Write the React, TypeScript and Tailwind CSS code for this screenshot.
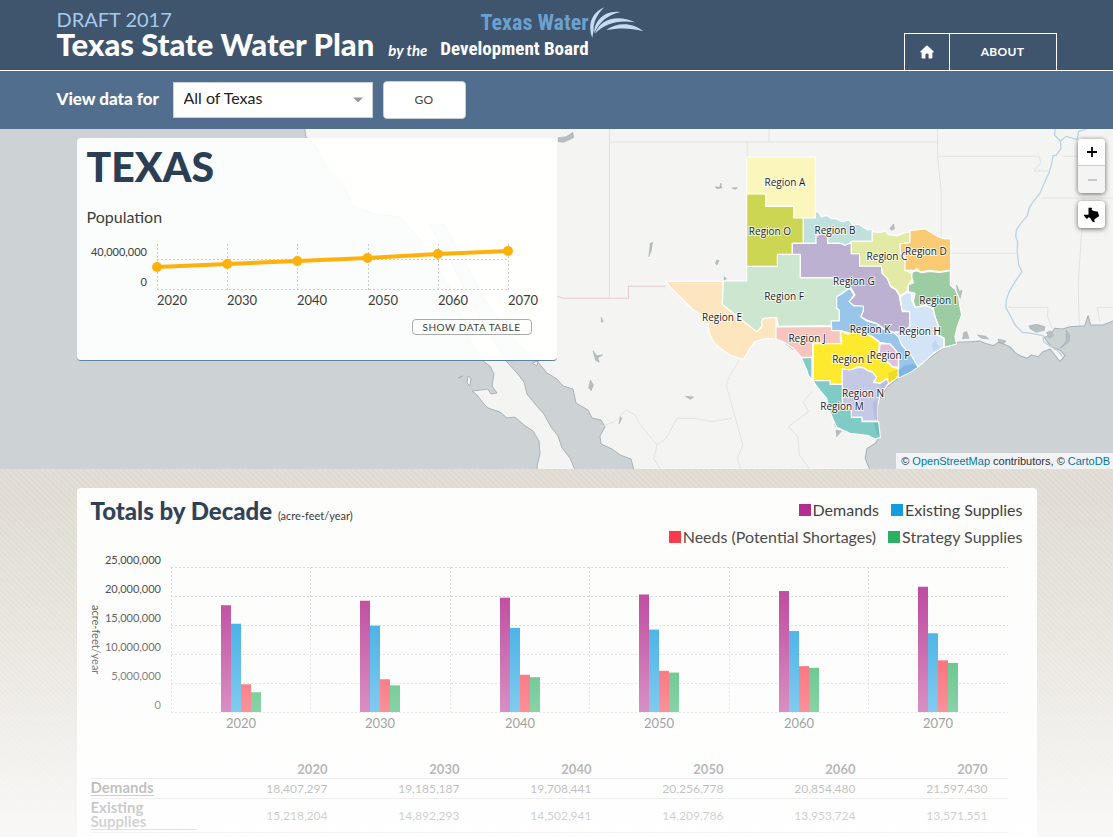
import React from 'react';

const YEARS = [2020, 2030, 2040, 2050, 2060, 2070];

const SERIES = [
  { name: 'Demands', color: '#b3298c', values: [18407297, 19185187, 19708441, 20256778, 20854480, 21597430] },
  { name: 'Existing Supplies', color: '#0f9ade', values: [15218204, 14892293, 14502941, 14209786, 13953724, 13571551] },
  { name: 'Needs (Potential Shortages)', color: '#f72c3c', values: [4780000, 5650000, 6420000, 7100000, 7900000, 8900000] },
  { name: 'Strategy Supplies', color: '#1bab55', values: [3400000, 4600000, 6000000, 6800000, 7620000, 8450000] },
];

const REGIONS = [
  { id: 'E', color: '#fde5bf', x: 215, y: 542, d: 'M46,424 L220,424 L217,493 L320,575 L335,562 V535 L360,530 L378,532 V597 L350,595 L315,605 L300,625 L280,659 L240,645 L210,625 L190,605 L178,580 L175,555 L155,525 L130,510 L110,490 L90,470 L60,440Z' },
  { id: 'F', color: '#cde6cf', x: 401, y: 479, d: 'M290,379 H382 V343 H451 V413 H551 L575,432 L600,440 L590,450 L575,460 L560,470 V505 L568,510 V543 H544 V557 L385,559 L380,532 L340,535 L335,545 V560 L320,575 L217,493 L220,423 H290Z' },
  { id: 'A', color: '#fbf6bc', x: 405, y: 137, d: 'M290,51 H496 V234 H431 V199 H347 V162 H290Z' },
  { id: 'O', color: '#ccd653', x: 361, y: 284, d: 'M290,162 H347 V199 H431 V234 H460 V310 H427 V343 H382 V379 H290Z' },
  { id: 'B', color: '#bfe0dc', x: 555, y: 282, d: 'M460,234 H496 V213 L508,219 L514,231 L530,226 L545,236 L560,236 L575,245 L598,240 L608,255 L625,252 L640,262 L655,270 L667,268 V304 H604 L600,310 L585,316 L570,310 H533 V290 L515,280 L498,290 V310 H460Z' },
  { id: 'G', color: '#bcb1d1', x: 612, y: 434, d: 'M427,310 H498 V289 L515,280 L533,289 V310 H570 L585,316 L604,308 V341 H629 V378 H694 L697,400 L712,415 L722,440 L738,450 L748,467 L752,490 L757,515 H779 V560 L760,574 L730,577 L700,565 L680,550 L650,540 L632,530 L640,512 V500 L612,497 L597,485 L615,465 L600,440 L575,430 L551,413 H451 V343 H427Z' },
  { id: 'C', color: '#e3eaa5', x: 710, y: 361, d: 'M604,304 H667 V275 L690,278 L705,272 L715,283 L740,288 L765,278 L780,276 V308 L750,312 L752,340 L765,350 V390 L787,402 L787,418 L775,435 L770,455 L750,467 L738,447 L722,438 L712,415 L697,400 L694,378 H629 V341 H604Z' },
  { id: 'D', color: '#facb73', x: 829, y: 346, d: 'M780,272 L800,270 L825,266 L845,278 L860,288 L880,296 L902,297 V390 L870,395 L838,391 L812,396 L800,386 L795,391 H765 V350 L752,340 L750,312 L780,308Z' },
  { id: 'I', color: '#9ccca1', x: 865, y: 492, d: 'M787,396 L800,392 L815,398 L838,394 L870,397 L901,392 V435 L915,448 L925,470 L930,500 L935,525 L922,560 L915,590 L920,612 L883,622 V595 L862,585 L865,555 L855,530 L850,505 L825,495 L797,502 L790,485 L795,460 L775,455 V435 L790,428 L785,410Z' },
  { id: 'H', color: '#d2e4f6', x: 810, y: 584, d: 'M750,470 L770,458 L785,460 L785,480 L795,502 L825,497 L848,505 L855,530 L865,560 L862,585 L881,595 V622 L850,640 L820,668 L804,680 L785,650 L755,615 L745,590 L730,577 L760,574 L779,560 V515 L757,512Z' },
  { id: 'K', color: '#99c5ea', x: 661, y: 580, d: 'M600,446 L612,465 L597,485 L612,498 H640 V512 L632,530 L650,543 L680,552 L700,567 L730,578 L745,590 L755,615 L785,648 L804,681 L780,697 L746,714 V665 L745,640 L720,612 L690,607 L665,588 L640,580 L595,578 L571,572 H544 V543 H568 V510 L560,505 V470 L575,462 L590,450Z' },
  { id: 'J', color: '#f6c5be', x: 472, y: 605, d: 'M378,561 L545,559 V572 H571 V600 L575,611 H488 V652 H454 L430,625 L405,608 L378,597Z' },
  { id: 'L', color: '#fdea2f', x: 606, y: 668, d: 'M571,572 L590,582 L640,578 L665,590 L688,607 L685,640 L710,665 L725,680 L745,685 V710 L715,733 L712,715 L690,729 L670,725 L680,712 L665,705 L668,695 L650,690 L640,682 L625,680 L600,690 L577,687 V733 H540 V722 H490 V611 H575 V600Z' },
  { id: 'P', color: '#dfbfdc', x: 721, y: 656, d: 'M690,612 L720,612 L738,632 L745,650 V682 L728,680 L708,660 L688,640Z' },
  { id: 'N', color: '#c5c9e5', x: 638, y: 770, d: 'M577,687 L600,690 L625,682 L642,684 L652,692 L668,697 L680,712 L670,727 L690,730 L712,716 L716,730 L690,765 L683,800 V843 H636 V832 H604 V805 L577,800Z' },
  { id: 'M', color: '#80cbc5', x: 576, y: 811, d: 'M454,653 H486 V722 H540 V733 H577 V800 L604,805 V832 H636 V845 H686 L691,893 L675,897 L655,887 L600,880 L560,862 L550,840 L538,810 L530,775 L510,752 L488,722 L475,705 L470,690Z' },
];

const MAP_LINES = [
  'M190 12 V518',
  'M190 51 H1088',
  'M567 51 V96',
  'M627 12 V51',
  'M1088 12 V94 H1366 L1371 112 L1352 138 H1395',
  'M1088 94 L1098 200 V385 H1303',
  'M1375 219 H1568',
  'M1281 547 H1390 L1389 575 L1402 612',
  'M1488 219 L1473 480 L1476 600',
  'M1430 94 H1480',
  'M1568 547 H1525 L1532 590',
  'M545 705 C530 740 500 770 515 800 L555 960 L540 1000 L550 1035',
  'M165 905 L205 890 L235 855 L260 870 L275 900 L320 960 L345 940 L375 880 L420 880 L470 890 L525 880',
  'M320 960 L312 1000 L330 1035',
  'M745 800 L720 830 L735 860 L680 905 L705 935 L710 990 L740 1035',
];

const LAKES = [
  'M480 185 L492 187 L495 174 L497 189 L484 191Z',
  'M525 189 L540 188 L536 193Z',
  'M302 355 L308 352 L304 378 L298 395Z',
  'M484 405 L490 407 L484 420 L480 416Z',
  'M145 677 L155 692 L172 690 L158 698 L162 712 L152 706Z',
  'M138 765 L146 780 L140 797 L133 788Z',
  'M398 814 L420 816 L412 823Z',
  'M220 875 L224 880 L216 897Z',
  'M505 455 L510 462 L504 466Z',
  'M168 577 L173 590 L168 592Z',
  'M1140 480 L1148 500 L1155 495 L1150 520 L1142 500Z',
  'M1160 622 L1168 620 L1174 640 L1156 641Z',
  'M1197 630 L1220 634 L1228 642 L1208 640Z',
  'M1254 642 L1275 648 L1268 658 L1255 652Z',
  'M1338 602 L1360 598 L1382 605 L1380 616 L1358 622 L1342 612Z',
  'M958 310 L968 297 L970 312 L962 316Z',
  'M1386 622 L1398 618 L1405 632 L1394 640Z',
  'M1440 615 L1450 630 L1448 650 L1424 670 L1440 648Z',
  'M805 880 L815 900 L808 905Z',
  'M810 915 L825 918 L812 935Z',
  'M670 655 L690 665 L695 675Z',
  'M50 38 L72 35 L90 22 L92 38 L65 52 L50 50Z',
];

const COLUMN = 837 / 6;

function RegionMap() {
  return (
    <svg
      className="block h-full w-full bg-[#f4f4f2]"
      viewBox="0 129 1113 340"
      preserveAspectRatio="xMidYMid slice"
      role="img"
      aria-label="Map of the Texas regional water planning areas"
    >
      <g fill="#cdd2d5" stroke="#a9b3b7" strokeWidth="1" strokeLinejoin="round">
        <path d="M-5 124 H304 L306 137 L316 146 L326 166 L345 188 L352 205 L372 213 L400 217 L420 240 L440 270 L455 300 L470 340 L483 361 L490 366 L494 374 L492 386 L497 393 L491 394 L488 389 L472 391 L477 395 L484 404 L488 408 L500 412 L507 418 L515 417 L524 425 L533 431 L539 441 L540 454 L537 466 L538 475 H-5Z" />
        <path d="M430 225 L455 270 L480 320 L507 362 L517 373 L524 382 L527 394 L536 405 L544 414 L551 427 L558 436 L562 448 L570 458 L575 470 L634 470 L631 459 L620 455 L612 449 L601 444 L600 436 L605 427 L601 420 L592 418 L588 410 L576 403 L573 389 L563 386 L557 379 L547 373 L537 361 L510 335 L485 300 L465 262 L445 225Z" />
        <path d="M463 376 L458 378Z" />
      </g>
      <path d="M468 376 L471 378 L470 386 L467 383Z M532 363 L538 361 L537 366Z" fill="#f4f4f2" stroke="#a9b3b7" strokeWidth="1" />
      <g transform="translate(540 125) scale(0.3654 0.333333)">
        <g fill="none" stroke="#dfe0df" strokeWidth="2.5">
          {MAP_LINES.map((d) => (
            <path key={d} d={d} />
          ))}
        </g>
        <path d="M45 513 L65 520 H242 V484 H343" fill="none" stroke="#e3cccf" strokeWidth="3" />
        <path
          d="M905 1040 L890 1000 L895 970 L918 955 L930 935 L925 880 V830 L950 785 L980 760 L1035 725 L1065 700 L1105 668 L1140 652 L1177 650 L1204 648 L1218 655 L1241 662 L1254 652 L1268 657 L1286 665 L1300 683 L1318 694 L1332 700 L1345 690 L1364 695 L1377 680 L1396 672 L1409 690 L1423 710 L1437 692 L1423 675 L1400 666 L1388 650 L1380 637 L1398 628 L1409 610 L1430 612 L1450 605 L1491 602 L1500 572 L1507 600 L1541 600 L1568 588 L1590 582 V1040Z"
          fill="#cdd2d5"
          stroke="#a9b3b7"
          strokeWidth="3"
          strokeLinejoin="round"
        />
        <g fill="#b7bfc3" stroke="#9ea9ae" strokeWidth="1.5">
          {LAKES.map((d) => (
            <path key={d} d={d} />
          ))}
        </g>
        <path
          d="M1410 12 L1408 30 L1424 48 L1426 70 L1412 92 L1404 92 L1400 118 L1394 140 L1386 160 L1378 180 L1368 205 L1350 230 L1338 250 L1334 272 L1316 295 L1304 315 L1302 335 L1307 350 L1306 380 L1310 420 L1319 440 L1300 470 L1284 500 L1276 525 L1275 548 L1286 570 L1300 600 L1320 622 L1345 625 L1377 632 L1378 650 L1400 666 L1420 680 L1430 695 M1424 48 L1440 34 L1470 44 L1474 20 L1495 12"
          fill="none"
          stroke="#b9d2e6"
          strokeWidth="3.5"
          strokeLinejoin="round"
        />
      </g>
      <g transform="translate(650 140) scale(0.333333)">
        <g stroke="#ffffff" strokeWidth="3.5" strokeLinejoin="round">
          {REGIONS.map((r) => (
            <path key={r.id} d={r.d} fill={r.color} />
          ))}
        </g>
        <g>
          <path d="M746 690 L765 676 L790 672 L802 681 L780 696 L747 712Z" fill="#7db5e5" />
          <path d="M715 700 L742 690 V708 L716 730Z" fill="#eedb25" />
          <path d="M668 790 L682 775 V842 L672 830Z M690 735 L708 722 L712 730 L694 752Z" fill="#b9bede" />
          <path d="M845 612 L858 600 L862 615 L872 620 L850 635Z" fill="#bfd7f0" />
          <path d="M672 848 H684 L689 890 L680 880Z" fill="#73bcb7" />
        </g>
      </g>
      <g
        className="font-['Open_Sans',sans-serif] text-[10px]"
        fill="#1c1c1c"
        stroke="#ffffff"
        strokeOpacity="0.75"
        strokeWidth="2"
        paintOrder="stroke"
        textAnchor="middle"
      >
        {REGIONS.map((r) => (
          <text key={r.id} x={650 + Math.round(r.x / 3)} y={140 + Math.round(r.y / 3)}>
            Region {r.id}
          </text>
        ))}
      </g>
    </svg>
  );
}

function PopulationChart() {
  const ys = [35, 32, 29, 26, 22, 19];
  const xs = YEARS.map((_, i) => 70 + i * 70.2);
  return (
    <svg className="block h-auto w-full" viewBox="0 0 460 84" role="img" aria-label="Population by decade">
      <g stroke="#cccccc" strokeWidth="1" strokeDasharray="2 2">
        <path d="M70 27.5 H421 M70 57.5 H421" />
        {xs.map((x) => (
          <path key={x} d={`M${Math.round(x) + 0.5} 12 V58`} />
        ))}
      </g>
      <polyline points={xs.map((x, i) => `${x},${ys[i]}`).join(' ')} fill="none" stroke="#ffb10a" strokeWidth="4" />
      {xs.map((x, i) => (
        <circle key={x} cx={x} cy={ys[i]} r="5" fill="#ffb10a" />
      ))}
      <g className="text-[11px]" fill="#3c3c3c" textAnchor="end">
        <text x="60" y="24">40,000,000</text>
        <text x="60" y="54">0</text>
      </g>
      <g className="text-[13px]" fill="#3c3c3c">
        {YEARS.map((year, i) => (
          <text key={year} x={Math.round(xs[i])} y="73">{year}</text>
        ))}
      </g>
    </svg>
  );
}

function TotalsChart() {
  const ticks = [25, 20, 15, 10, 5, 0];
  return (
    <svg className="block h-auto w-full" viewBox="0 0 917 184" role="img" aria-label="Totals by decade in acre-feet per year">
      <g stroke="#d4d4d4" strokeWidth="1" strokeDasharray="2 2">
        {ticks.map((t, i) => (
          <path key={t} d={`M80 ${15.5 + i * 29} H917`} />
        ))}
        {YEARS.map((year, i) => (
          <path key={year} d={`M${Math.floor(80 + i * COLUMN) + 0.5} 15 V160`} />
        ))}
      </g>
      {YEARS.map((year, i) => (
        <g key={year}>
          {SERIES.map((s, j) => {
            const h = (s.values[i] / 25000000) * 145;
            return (
              <rect key={s.name} x={Math.floor(80 + i * COLUMN) + 50 + j * 10} y={160 - h} width="10" height={h} fill={s.color} />
            );
          })}
          <text className="text-[13px]" x={Math.round(80 + i * COLUMN + COLUMN / 2)} y="176" fill="#3c3c3c" textAnchor="middle">
            {year}
          </text>
        </g>
      ))}
      <g className="text-[11px]" fill="#2c2c2c" textAnchor="end">
        {ticks.map((t, i) => (
          <text key={t} x="70" y={12 + i * 29}>
            {t === 0 ? '0' : `${t},000,000`}
          </text>
        ))}
      </g>
      <text className="text-[11px]" transform="translate(1 53) rotate(90)" fill="#2c2c2c">
        acre-feet/year
      </text>
    </svg>
  );
}

export default function App() {
  return (
    <div className="flex min-h-screen flex-col bg-white font-['Lato',sans-serif] text-[#3c3c3c]">
      <header className="border-b border-white bg-[#3f546d]">
        <div className="mx-auto flex h-[70px] max-w-[1000px] items-end justify-between">
          <div className="flex items-end">
            <div className="pb-[11px]">
              <p className="text-[20px] leading-[20px] text-[#a5cbec]">DRAFT 2017</p>
              <h1 className="font-['Lato_Black','Lato',sans-serif] text-[31px] leading-[30px] font-black whitespace-nowrap text-white">
                Texas State Water Plan
              </h1>
            </div>
            <p className="ml-[14px] pb-3 text-[15px] leading-[16px] font-bold text-white italic">by the</p>
            <a
              href="#twdb"
              className="ml-[13px] flex items-start pb-[9px] font-['Roboto_Condensed','Lato',sans-serif] font-bold whitespace-nowrap"
            >
              <span className="flex flex-col items-end pt-[2px]">
                <span className="text-[22px] leading-[28px] text-[#6aa1ce]">Texas Water</span>
                <span className="text-[19px] leading-[24px] text-white">Development Board</span>
              </span>
              <svg className="h-[32px] w-[55px]" viewBox="648 14 165 96" fill="#c3dcf3" aria-hidden="true">
                <path d="M658 106 C644 72 652 32 694 15 C672 36 660 62 662 84Z" />
                <path d="M664 92 C662 58 694 22 742 29 C704 38 678 60 664 92Z" />
                <path d="M666 94 C680 52 732 34 786 60 C738 52 696 62 666 94Z" />
                <path d="M700 83 C732 58 780 60 811 87 C772 76 740 76 700 83Z" />
              </svg>
            </a>
          </div>
          <nav className="flex h-[37px] border border-b-0 border-white">
            <a href="#home" aria-label="Home" className="flex w-[45px] items-center justify-center border-r border-white">
              <svg className="h-[14px] w-[14px]" viewBox="119 72 44 43" fill="#ffffff" aria-hidden="true">
                <path d="M139 74 Q141 72 143 74 L162 92 Q163 95 160 95 H158 V111 Q158 114 155 114 H146 V102 Q146 98 141 98 Q136 98 136 102 V114 H127 Q124 114 124 111 V95 H122 Q119 95 120 92Z" />
              </svg>
            </a>
            <a href="#about" className="flex w-[106px] items-center justify-center text-[12px] font-bold tracking-wide text-white">
              ABOUT
            </a>
          </nav>
        </div>
      </header>

      <form className="bg-[#526e8f]" onSubmit={(e) => e.preventDefault()}>
        <div className="mx-auto flex h-[58px] max-w-[1000px] items-center gap-[10px]">
          <label htmlFor="region" className="min-w-[106px] pb-[2px] font-['Lato_Black','Lato',sans-serif] text-[17px] font-black whitespace-nowrap text-white">
            View data for
          </label>
          <div className="relative">
            <select
              id="region"
              defaultValue="all"
              className="block h-[36px] w-[200px] appearance-none border border-[#c9ced3] bg-white pb-[4px] pl-[10px] text-[16px] text-[#222222]"
            >
              <option value="all">All of Texas</option>
            </select>
            <svg className="pointer-events-none absolute top-[15px] right-[10px] h-[6px] w-[10px]" viewBox="0 0 10 6" fill="#999999" aria-hidden="true">
              <path d="M0 0.5 H10 L5 5.5Z" />
            </svg>
          </div>
          <button type="submit" className="h-[38px] w-[83px] rounded border border-[#c9ced3] bg-white text-[12px] tracking-wide text-[#444444]">
            GO
          </button>
        </div>
      </form>

      <section className="relative h-[340px] overflow-hidden">
        <RegionMap />
        <div className="absolute inset-x-0 top-[9px] mx-auto w-[960px] max-w-full">
          <div className="flex h-[223px] w-[480px] flex-col rounded-[4px] border-b border-[#5d80a8] bg-white/92 px-[10px]">
            <h2 className="mt-[7px] font-['Lato_Black','Lato',sans-serif] text-[41px] leading-[44px] font-black text-[#2b3e54]">TEXAS</h2>
            <h3 className="mt-[16px] text-[16px] leading-[24px]">Population</h3>
            <div className="mt-[3px]">
              <PopulationChart />
            </div>
            <div className="mt-[3px] flex justify-end pr-[15px]">
              <button type="button" className="h-[16px] w-[120px] rounded-[4px] border border-[#aaaaaa] bg-white text-[10px] leading-[14px] tracking-wider whitespace-nowrap">
                SHOW DATA TABLE
              </button>
            </div>
          </div>
        </div>
        <div className="absolute top-[10px] right-[8px] flex flex-col gap-2">
          <div className="flex flex-col overflow-hidden rounded-[4px] shadow-[0_1px_5px_rgba(0,0,0,0.6)]">
            <button type="button" aria-label="Zoom in" className="flex h-[27px] w-[27px] items-center justify-center border-b border-[#cccccc] bg-white">
              <svg className="h-[10px] w-[10px]" viewBox="0 0 10 10" aria-hidden="true">
                <path d="M5 0 V10 M0 5 H10" stroke="#000000" strokeWidth="1.8" />
              </svg>
            </button>
            <button type="button" aria-label="Zoom out" className="flex h-[27px] w-[27px] items-center justify-center bg-[#f4f4f4]">
              <svg className="h-[10px] w-[10px]" viewBox="0 0 10 10" aria-hidden="true">
                <path d="M1 5 H10" stroke="#bbbbbb" strokeWidth="1.6" />
              </svg>
            </button>
          </div>
          <button type="button" aria-label="Show all of Texas" className="flex h-[27px] w-[27px] items-center justify-center rounded-[4px] bg-white shadow-[0_1px_5px_rgba(0,0,0,0.6)]">
            <svg className="h-[16px] w-[17px]" viewBox="612 560 50 48" aria-hidden="true">
              <path d="M628 562 H638 V569 L644 572 L656 574 L658 581 L660 588 L650 594 L645 599 L647 606 L640 604 L633 593 L628 591 L624 596 L619 592 L613 583 H628Z" fill="#000000" />
            </svg>
          </button>
        </div>
        <p className="absolute right-0 bottom-0 bg-white/70 py-[1px] pr-[3px] pl-[5px] font-['Liberation_Sans',sans-serif] text-[11px] leading-[14px] text-[#333333]">
          © <a href="#osm" className="text-[#0078a8]">OpenStreetMap</a> contributors, ©{' '}
          <a href="#cartodb" className="text-[#0078a8]">CartoDB</a>
        </p>
      </section>

      <main className="relative flex flex-1 flex-col bg-[#dfdbd2] bg-[repeating-linear-gradient(45deg,rgba(255,255,255,0.12)_0px,rgba(255,255,255,0.12)_2px,transparent_2px,transparent_4px)] pt-[19px]">
        <div className="mx-auto w-full max-w-[960px] flex-1 rounded-t-[4px] bg-white/92 pr-[29px] pl-[14px]">
          <div className="flex items-start justify-between pt-[8px]">
            <h2 className="font-['Lato_Black','Lato',sans-serif] text-[24px] leading-[30px] font-black whitespace-nowrap text-[#2b3e54]">
              Totals by Decade <small className="font-['Lato',sans-serif] text-[11px] font-normal text-[#333333]">(acre-feet/year)</small>
            </h2>
            <ul className="-mr-[15px] flex max-w-[380px] flex-wrap justify-end gap-x-[12px] text-[16px] leading-[27px]">
              {SERIES.map((s) => (
                <li key={s.name} className="flex items-center gap-[2px] whitespace-nowrap">
                  <span className="h-[12px] w-[12px]" style={{ backgroundColor: s.color }} />
                  {s.name}
                </li>
              ))}
            </ul>
          </div>
          <div className="pt-[2px]">
            <TotalsChart />
          </div>
          <table className="mt-[24px] w-full table-fixed border-collapse text-[12px] leading-[14px]">
            <thead>
              <tr className="border-b border-[#cccccc]">
                <th className="w-[125px]" />
                {YEARS.map((year) => (
                  <th key={year} scope="col" className="pt-[2px] pr-[20px] pb-[2px] text-right text-[13px] font-bold">
                    {year}
                  </th>
                ))}
              </tr>
            </thead>
            <tbody>
              {SERIES.slice(0, 2).map((s) => (
                <tr key={s.name} className="border-b border-[#cccccc]">
                  <th scope="row" className="pt-[1px] pb-[2px] text-left text-[15px] font-bold">
                    <span className="block w-fit max-w-[106px] border-b pb-[1px]" style={{ borderColor: s.color }}>
                      {s.name}
                    </span>
                  </th>
                  {s.values.map((v) => (
                    <td key={v} className="pr-[20px] text-right">
                      {v.toLocaleString('en-US')}
                    </td>
                  ))}
                </tr>
              ))}
            </tbody>
          </table>
        </div>
        <div className="pointer-events-none absolute inset-0 bg-[linear-gradient(to_bottom,rgba(255,255,255,0)_8%,rgba(255,255,255,0.2)_37%,rgba(255,255,255,0.48)_66%,rgba(255,255,255,0.8)_100%)]" />
      </main>
    </div>
  );
}
